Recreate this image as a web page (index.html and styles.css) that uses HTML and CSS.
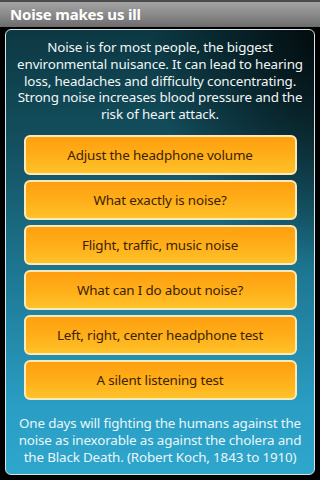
FILE: index.html
```html
<!DOCTYPE html>
<html>
<head>
<meta charset="utf-8">
<link rel="stylesheet" href="styles.css">
</head>
<body>
<div class="titlebar">Noise makes us ill</div>
<div class="panel">
  <p class="intro">Noise is for most people, the biggest environmental nuisance. It can lead to hearing loss, headaches and difficulty concentrating. Strong noise increases blood pressure and the risk of heart attack.</p>
  <div class="buttons">
    <div class="btn">Adjust the headphone volume</div>
    <div class="btn">What exactly is noise?</div>
    <div class="btn">Flight, traffic, music noise</div>
    <div class="btn">What can I do about noise?</div>
    <div class="btn">Left, right, center headphone test</div>
    <div class="btn">A silent listening test</div>
  </div>
  <p class="quote">One days will fighting the humans against the noise as inexorable as against the cholera and the Black Death. (Robert Koch, 1843 to 1910)</p>
</div>
</body>
</html>
```
FILE: styles.css
```css
html, body {
  margin: 0;
  padding: 0;
  background: #000;
  width: 320px;
  height: 480px;
  overflow: hidden;
  font-family: "Noto Sans", "Open Sans", sans-serif;
}
.titlebar {
  height: 25px;
  border-top: 2px solid #4a4a4a;
  background: linear-gradient(#a4a4a4, #8a8a8a 50%, #6c6c6c);
  color: #fff;
  font-weight: bold;
  font-size: 15px;
  line-height: 25px;
  padding-left: 10px;
  letter-spacing: -0.2px;
}
.panel {
  margin: 2px 5px 0 5px;
  height: 446px;
  border: 1px solid #d8e4e8;
  border-radius: 6px;
  background:
    radial-gradient(ellipse 180px 240px at 105% 0%, rgba(0,0,0,0.85), rgba(0,0,0,0) 100%),
    linear-gradient(#0c3843 0%, #134f5e 25%, #1d7792 55%, #2a9ec4 85%, #2ea6cc 100%);
  display: flex;
  flex-direction: column;
  align-items: center;
  box-sizing: border-box;
}
.intro {
  margin: 9px 6px 0 6px;
  color: #f2f6f6;
  font-size: 13.4px;
  letter-spacing: -0.15px;
  line-height: 16.8px;
  text-align: center;
}
.buttons {
  margin-top: 12px;
  display: flex;
  flex-direction: column;
  gap: 5px;
  width: 273px;
}
.btn {
  height: 36px;
  border: 2px solid #fbeab8;
  border-radius: 6px;
  background: linear-gradient(#ff9f10, #ffae18 50%, #ffc22a);
  color: #3c2200;
  font-size: 13.4px;
  letter-spacing: -0.15px;
  line-height: 36px;
  text-align: center;
}
.quote {
  margin: 15px 6px 0 6px;
  color: #eaf6fa;
  font-size: 13.4px;
  letter-spacing: -0.15px;
  line-height: 16.8px;
  text-align: center;
}
```
